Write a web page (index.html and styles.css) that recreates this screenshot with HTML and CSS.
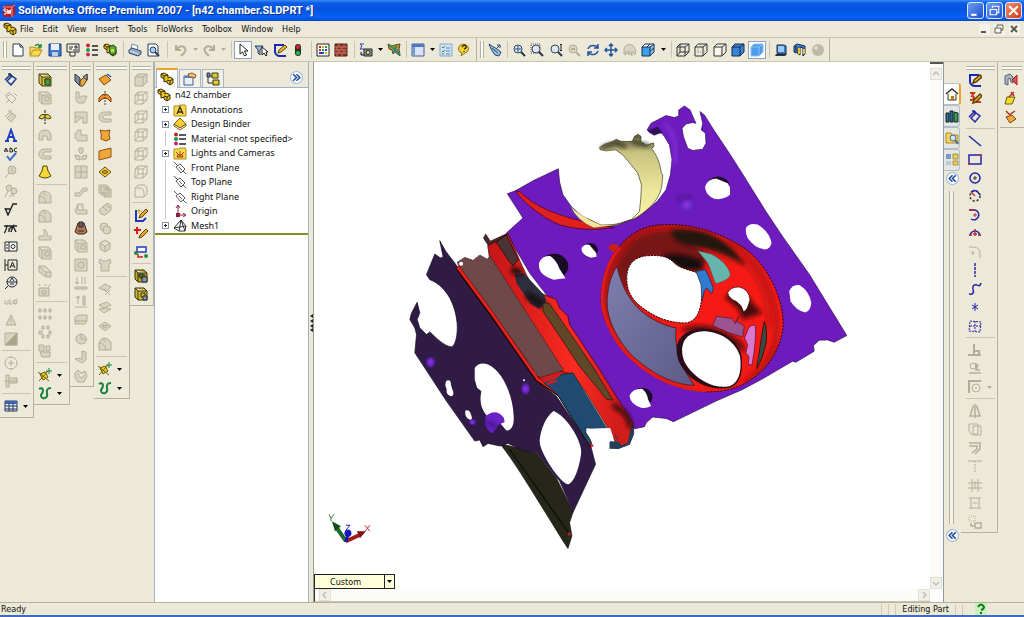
FILE: index.html
```html
<!DOCTYPE html>
<html lang="en">
<head>
<meta charset="utf-8">
<title>SolidWorks Office Premium 2007 - [n42 chamber.SLDPRT *]</title>
<link rel="stylesheet" href="styles.css">
</head>
<body>
<svg class="sprite" aria-hidden="true">
  <symbol id="cube" viewBox="0 0 14 14"><path d="M1 4h8v9H1zM4 1h9v8h-9zM1 4l3-3M9 4l4-3M9 13l4-4M1 13l3-4"/></symbol>
  <symbol id="block" viewBox="0 0 14 14"><path d="M1 4l3-3h9v8l-4 4H1zM1 4h8v9M9 4l4-3"/></symbol>
  <symbol id="frame" viewBox="0 0 14 14"><path d="M1 1h9l3 3v9H4l-3-3zM1 1l3 3h9M4 4v9M7 6h4v4H7z"/></symbol>
  <symbol id="u" viewBox="0 0 14 14"><path d="M13 2H6a5 5 0 0 0 0 10h7V9H7a2 2 0 0 1 0-4h6z"/></symbol>
  <symbol id="dome" viewBox="0 0 14 14"><path d="M1 13V6q1-4 5-5 6 1 7 5v7zM1 6q6 0 7 7M6 1q-1 3 2 4"/></symbol>
  <symbol id="part" viewBox="0 0 14 14"><path d="M1 2l3-1 4 2v3l2-1 3 2v4l-3 2-3-2v-2L4 10V7L1 5z" fill="#e8c820" stroke="#3a2c00"/><path d="M1 2l3 2 4-1M4 4v3M7 8l3 1 3-2M10 9v4" stroke="#3a2c00" fill="none"/></symbol>
  <symbol id="smart" viewBox="0 0 14 14"><path d="M3 8l5-5 4 3-5 6zM1 7l6-6M7 1H4M7 1v3"/></symbol>
  <symbol id="sketch" viewBox="0 0 14 14"><path d="M11 2H2v7q1 4 5 4h6" fill="none" stroke="#1b2ab0" stroke-width="2"/><path d="M5 10l1-3 6-5 2 2-6 5z" fill="#f0b828" stroke="#60400a"/></symbol>
  <symbol id="spline" viewBox="0 0 14 14"><path d="M1 3q3-2 4 1 0 3-2 5 0 4 4 3 3-1 2-5-1-5 4-5" fill="none" stroke="#15803a" stroke-width="2"/></symbol>
  <symbol id="refgeo" viewBox="0 0 14 14"><path d="M2 6l5-2 3 5-5 3zM0 4l11 9M10 3l-9 10" fill="#ecd42c" stroke="#6a5800"/><path d="M11 0v6M8 3h6" stroke="#16803a"/></symbol>
  <symbol id="lens" viewBox="0 0 14 14"><circle cx="6" cy="6" r="4" fill="#dce9f4" stroke="#394656"/><path d="M9 9l4 4" stroke="#26364e" stroke-width="2"/></symbol>
  <symbol id="plane" viewBox="0 0 14 14"><path d="M3 6l4-3 5 5-4 4zM1 1l4 4M10 10l3 3M6 6l3 3" fill="none" stroke="#55585c"/></symbol>
  <symbol id="caret" viewBox="0 0 5 3"><path d="M0 0h5L2.500 3z"/></symbol>
  <symbol id="left2" viewBox="0 0 12 12"><circle cx="6" cy="6" r="5.500" fill="#fff" stroke="#9db6d8"/><path d="M6 3L3 6l3 3M9 3L6 6l3 3" fill="none" stroke="#1a48a0" stroke-width="1.400"/></symbol>
</svg>

<header class="titlebar">
  <svg class="logo" viewBox="0 0 14 14"><path d="M1 3l3-2h9v10l-3 2H1z" fill="#b31c20"/><path d="M1 3h9v10M10 3l3-2" fill="none" stroke="#ef9a92"/><path d="M4 5H2v2h2v3H2M5 5l1 5 1-4 1 4 1-5" fill="none" stroke="#fff"/></svg>
  <h1>SolidWorks Office Premium 2007 - [n42 chamber.SLDPRT *]</h1>
  <div class="winbtns">
    <button aria-label="Minimize"><svg viewBox="0 0 14 14"><path d="M3 11h5" stroke-width="2"/></svg></button>
    <button aria-label="Restore"><svg viewBox="0 0 14 14"><path d="M5 5V3h6v6H9M3 6h6v5H3z"/></svg></button>
    <button class="close" aria-label="Close"><svg viewBox="0 0 14 14"><path d="M3 3l8 8M11 3l-8 8" stroke-width="2"/></svg></button>
  </div>
</header>

<nav class="menubar">
  <svg class="ico" viewBox="0 0 14 14"><use href="#part"/></svg>
  <button>File</button><button>Edit</button><button>View</button><button>Insert</button><button>Tools</button><button>FloWorks</button><button>Toolbox</button><button>Window</button><button>Help</button>
  <div class="docbtns">
    <button aria-label="Minimize document"><svg viewBox="0 0 10 10"><path d="M2 8h5" stroke-width="2"/></svg></button>
    <button aria-label="Restore document"><svg viewBox="0 0 10 10"><path d="M3 3V1h6v5H7M1 4h6v5H1z"/></svg></button>
    <button aria-label="Close document"><svg viewBox="0 0 10 10"><path d="M2 2l6 6M8 2L2 8" stroke-width="2"/></svg></button>
  </div>
</nav>

<div class="toolbars">
  <div class="hbar">
    <i class="grip"></i>
    <div class="set">
      <button class="tool" aria-label="New"><svg viewBox="0 0 14 14"><path d="M2 1h7l3 3v9H2zM9 1v3h3" fill="#fff" stroke="#2a3c58"/></svg></button>
      <button class="tool" aria-label="Open"><svg viewBox="0 0 14 14"><path d="M1 12V4h4l1 1h5v2" fill="#f6dc70" stroke="#b68a18"/><path d="M1 13l3-6h9l-3 6z" fill="#fbd94a" stroke="#b68a18"/><path d="M6 3q3-3 5 0M9 4h3V1" fill="none" stroke="#1e8a2c" stroke-width="1.500"/></svg></button>
      <button class="tool" aria-label="Save"><svg viewBox="0 0 14 14"><path d="M1 1h12v12H1z" fill="#3f78cc" stroke="#1d3f85"/><path d="M3 1h8v6H3z" fill="#e8f0fa"/><path d="M4 9h6v4H4z" fill="#b9cdea"/></svg></button>
      <button class="tool" aria-label="Make drawing"><svg viewBox="0 0 14 14"><path d="M1 1h12v8H1zM3 4h4M3 6h3M9 3h2v2H9zM7 7h5M4 9v4h5V9" fill="#f4f2e8" stroke="#2d2d2d"/></svg></button>
      <button class="tool" aria-label="Edit material"><svg viewBox="0 0 14 14"><circle cx="3" cy="2.500" r="2" fill="#d02030"/><circle cx="3" cy="7" r="2" fill="#20a040"/><circle cx="3" cy="11.500" r="2" fill="#d02060"/><path d="M7 3h6M7 7h6M7 12h6" stroke="#222" stroke-width="1.500"/></svg></button>
      <button class="tool" aria-label="Make assembly"><svg viewBox="0 0 14 14"><use href="#part"/><path d="M6 4l4-2 3 2v6l-3 2-3-1z" fill="#58a838" stroke="#1e4a10"/><path d="M8 6h3v3H8z" fill="#b9df50"/></svg></button>
    </div><i class="sep"></i>
    <div class="set">
      <button class="tool" aria-label="Print"><svg viewBox="0 0 14 14"><path d="M3 6l1-5 6 2-1 4" fill="#fff" stroke="#6b87ab"/><path d="M1 7l3-2 9 3v3l-3 2-9-3z" fill="#90a9c6" stroke="#354a66"/><path d="M2 8l8 3" stroke="#e7eef7"/></svg></button>
      <button class="tool" aria-label="Print preview"><svg viewBox="0 0 14 14"><path d="M2 1h8l2 2v10H2z" fill="#fff" stroke="#2a3c58"/><circle cx="7" cy="7" r="3" fill="#a9cdf0" stroke="#2a3c58"/><path d="M9 9l4 4" stroke="#2a3c58" stroke-width="2"/></svg></button>
    </div><i class="sep wide"></i>
    <div class="set dim">
      <button class="tool" aria-label="Undo"><svg viewBox="0 0 14 14"><path d="M2 2v5h5M3 6q3-4 7-2 3 3 0 6l-3 3" fill="none" stroke-width="2"/></svg></button><button class="drop" aria-label="Undo list"><svg viewBox="0 0 5 3"><use href="#caret"/></svg></button>
      <button class="tool" aria-label="Redo"><svg viewBox="0 0 14 14"><path d="M12 2v5H7M11 6Q8 2 4 4q-3 3 0 6l3 3" fill="none" stroke-width="2"/></svg></button><button class="drop" aria-label="Redo list"><svg viewBox="0 0 5 3"><use href="#caret"/></svg></button>
    </div><i class="sep"></i>
    <div class="set">
      <button class="tool on" aria-label="Select"><svg viewBox="0 0 14 14"><path d="M4 1v10l2.500-2 2 4 2-1-2-4H12z" fill="#fff" stroke="#222"/></svg></button>
      <button class="tool" aria-label="Selection filter"><svg viewBox="0 0 14 14"><path d="M1 3h8L6 7v5L4 10V7z" fill="#9fb9d8" stroke="#2a3c58"/><path d="M8 4v8l2-2 2 3 1-1-1-3h2z" fill="#fff" stroke="#222"/></svg></button>
      <button class="tool" aria-label="Sketch"><svg viewBox="0 0 14 14"><use href="#sketch"/></svg></button>
      <button class="tool" aria-label="Rebuild"><svg viewBox="0 0 14 14"><rect x="4" y="1" width="6" height="12" rx="3" fill="#263226"/><circle cx="7" cy="4" r="2" fill="#e0202a"/><circle cx="7" cy="10" r="2" fill="#28c040"/></svg></button>
    </div><i class="sep"></i>
    <div class="set">
      <button class="tool" aria-label="Edit color"><svg viewBox="0 0 14 14"><path d="M1 1h12v12H1z" fill="#fff" stroke="#222"/><path d="M3 4h2M3 7h2" stroke="#e02020" stroke-width="2"/><path d="M6 4h2M9 10h2" stroke="#e0b020" stroke-width="2"/><path d="M9 4h2M6 7h2" stroke="#20a040" stroke-width="2"/><path d="M9 7h2M3 10h5" stroke="#3040c0" stroke-width="2"/></svg></button>
      <button class="tool" aria-label="Edit texture"><svg viewBox="0 0 14 14"><path d="M1 1h12v12H1z" fill="#8e2f24" stroke="#5a1a12"/><path d="M1 4h12M1 7h12M1 10h12M5 1v3M10 1v3M3 4v3M8 4v3M5 7v3M10 7v3M3 10v3M8 10v3" stroke="#c07c68"/></svg></button>
    </div><i class="sep"></i>
    <div class="set">
      <button class="tool" aria-label="Measure"><svg viewBox="0 0 14 14"><path d="M5 1H1l2 2-2 3h4" fill="none" stroke="#2a3cb0"/><path d="M2 9v3h3M5 6h8v7H5z" fill="#8898a8" stroke="#222"/><circle cx="9" cy="9.500" r="2" fill="#e8e080" stroke="#222"/></svg></button><button class="drop" aria-label="Measure list"><svg viewBox="0 0 5 3"><use href="#caret"/></svg></button>
      <button class="tool" aria-label="Flow simulation"><svg viewBox="0 0 14 14"><path d="M1 1l4 2 3-1 5-1-1 5 1 7-5-4-2 2-1-4-3-1z" fill="#e08828" stroke="#5a4a20"/><path d="M2 2l5 4 3-3" stroke="#2c9a48" stroke-width="2" fill="none"/><path d="M7 10l1-4 5 5" stroke="#188a90" stroke-width="2" fill="none"/></svg></button>
    </div><i class="sep"></i>
    <div class="set">
      <button class="tool" aria-label="Viewports"><svg viewBox="0 0 14 14"><path d="M1 1h12v12H1z" fill="#d8e4f6" stroke="#46608e"/><path d="M1 1h12v3H1z" fill="#4e78c0"/><path d="M1 4h3v9H1z" fill="#7898d0"/></svg></button><button class="drop" aria-label="Viewport list"><svg viewBox="0 0 5 3"><use href="#caret"/></svg></button>
      <button class="tool" aria-label="Options"><svg viewBox="0 0 14 14"><path d="M1 1h12v12H1z" fill="#cfe2f6" stroke="#86a6cc"/><path d="M3 4l1 1 2-2M3 8l1 1 2-2M3 11h2" fill="none" stroke="#28903c"/><path d="M7 5h4M7 8h4M7 11h4" stroke="#6280a4"/></svg></button>
      <button class="tool" aria-label="Help"><svg viewBox="0 0 14 14"><path d="M4 13l1-3a5 4.500 0 1 1 3 0z" fill="#f5d233" stroke="#92701a"/><path d="M5 4q2-3 4-1 1 2-2 3M7 8v1" fill="none" stroke="#4a3408" stroke-width="1.500"/></svg></button>
    </div>
  </div>
  <div class="hbar">
    <i class="grip"></i>
    <div class="set">
      <button class="tool" aria-label="View orientation"><svg viewBox="0 0 14 14"><path d="M1 1l2 5 4 6 4 1 2-4-4-3-5-3z" fill="#9fc0e0" stroke="#22446e"/><path d="M4 5l6 5M8 6l4-4M9 2h3v3" fill="none" stroke="#22446e"/></svg></button>
    </div><i class="sep"></i>
    <div class="set">
      <button class="tool" aria-label="Zoom to fit"><svg viewBox="0 0 14 14"><use href="#lens"/><path d="M3 6h6M6 3v6" stroke="#2a4a90"/></svg></button>
      <button class="tool" aria-label="Zoom to area"><svg viewBox="0 0 14 14"><path d="M1 1h9v9H1z" fill="none" stroke="#555" stroke-dasharray="1 1"/><use href="#lens"/></svg></button>
      <button class="tool" aria-label="Zoom in or out"><svg viewBox="0 0 14 14"><use href="#lens"/><path d="M12 1v7M11 2l1-1 1 1M11 7l1 1 1-1" fill="none" stroke="#222"/></svg></button>
      <button class="tool" aria-label="Zoom to selection"><svg class="dim" viewBox="0 0 14 14"><circle cx="6" cy="6" r="4"/><path d="M4 6h4M9 9l4 4" stroke-width="2"/></svg></button>
      <button class="tool" aria-label="Rotate view"><svg viewBox="0 0 14 14"><path d="M2 6q2-5 8-3l2 2M12 1v4H8M12 8q-2 5-8 3L2 9M2 13V9h4" fill="none" stroke="#20549a" stroke-width="1.500"/></svg></button>
      <button class="tool" aria-label="Pan"><svg viewBox="0 0 14 14"><path d="M7 1v12M1 7h12M5 3l2-2 2 2M5 11l2 2 2-2M3 5L1 7l2 2M11 5l2 2-2 2" fill="none" stroke="#20549a" stroke-width="1.500"/></svg></button>
      <button class="tool" aria-label="Roll view"><svg class="dim" viewBox="0 0 14 14"><path d="M1 11V5q3-5 8-3 5 4 3 10L9 8v5L6 8v4L3 8v4z"/></svg></button>
      <button class="tool" aria-label="Standard views"><svg viewBox="0 0 14 14"><path d="M1 4h8v9H1z" fill="#38a0e8"/><path d="M1 4l3-3h9l-4 3z" fill="#fff"/><path d="M9 4l4-3v8l-4 4z" fill="#7cc4f4"/><path d="M1 4l3-3h9v8l-4 4H1zM1 4h8v9M9 4l4-3M6 4l3-3M13 5l-4 3" fill="none" stroke="#1d2f52"/></svg></button><button class="drop" aria-label="Standard view list"><svg viewBox="0 0 5 3"><use href="#caret"/></svg></button>
    </div><i class="sep"></i>
    <div class="set">
      <button class="tool" aria-label="Wireframe"><svg viewBox="0 0 14 14" fill="none" stroke="#333"><use href="#cube"/></svg></button>
      <button class="tool" aria-label="Hidden lines visible"><svg viewBox="0 0 14 14" fill="none" stroke="#333"><use href="#block"/><path d="M4 1v8H1M4 9h9" stroke="#999" stroke-dasharray="1 1"/></svg></button>
      <button class="tool" aria-label="Hidden lines removed"><svg viewBox="0 0 14 14" fill="#f7f5ec" stroke="#333"><use href="#block"/></svg></button>
      <button class="tool" aria-label="Shaded with edges"><svg viewBox="0 0 14 14" fill="#3b86d4" stroke="#14294c"><use href="#block"/></svg></button>
      <button class="tool on" aria-label="Shaded"><svg viewBox="0 0 14 14" fill="#4e9bea" stroke="#86c0f6"><use href="#block"/></svg></button>
    </div><i class="sep"></i>
    <div class="set">
      <button class="tool" aria-label="Shadows"><svg viewBox="0 0 14 14"><path d="M2 11h11l-2 2H1z" fill="#333"/><path d="M3 2h7l2 1v8H4l-1-1z" fill="#3f7fca" stroke="#14294c"/><path d="M4 3h6v6H4z" fill="#9ccaf4"/></svg></button>
      <button class="tool" aria-label="Section view"><svg viewBox="0 0 14 14"><path d="M2 3l3-2 8 2v8l-2 2V5L8 4v8l-3-2V4L4 3v7l-2-1z" fill="#3f7fca" stroke="#14294c"/><path d="M6 5h2v6H6zM11 6h2v5h-2z" fill="#e8c030"/></svg></button>
      <button class="tool" aria-label="RealView"><svg viewBox="0 0 14 14"><circle cx="7" cy="7" r="6" fill="#bdb9a6"/><circle cx="5" cy="5" r="2" fill="#dedbca"/></svg></button>
    </div>
  </div>
</div>

<main class="work">
  <div class="vbar w34">
    <i class="hgrip"></i>
    <div class="col">
      <button class="tool" aria-label="Smart dimension"><svg viewBox="0 0 14 14" fill="#dfe8f8" stroke="#1c3478" stroke-width="1.500"><use href="#smart"/></svg></button>
      <button class="tool" aria-label="Auto dimension"><svg class="dim" viewBox="0 0 14 14"><path d="M2 6l5-3 5 5-4 4zM1 5l5-4M10 2l3 3M2 12l3-3" fill="none"/></svg></button>
      <button class="tool" aria-label="Model items"><svg class="dim" viewBox="0 0 14 14"><use href="#smart"/></svg></button>
      <button class="tool" aria-label="Note"><svg viewBox="0 0 14 14"><path d="M1 13h4M9 13h4M3 13L7 2l4 11M5 9h4" fill="none" stroke="#1e3cc0" stroke-width="2"/></svg></button>
      <button class="tool" aria-label="Spell checker"><svg viewBox="0 0 14 14"><path d="M0 5l2-4 2 4M1 4h2M6 1v4h2q2-1 0-2 1-2-2-2M13 1q-3 0-3 2t3 2" fill="none" stroke="#222"/><path d="M3 9l3 4 6-7" fill="none" stroke="#3b70c8" stroke-width="2"/></svg></button>
      <button class="tool" aria-label="Balloon"><svg class="dim" viewBox="0 0 14 14"><circle cx="8" cy="5" r="4"/><path d="M5 8l-4 5M8 3v4"/></svg></button>
      <button class="tool" aria-label="Auto balloon"><svg class="dim" viewBox="0 0 14 14"><circle cx="5" cy="4" r="3"/><circle cx="10" cy="7" r="3"/><path d="M4 7l-3 6M9 10l-4 3M8 9l2 4"/></svg></button>
      <button class="tool" aria-label="Surface finish"><svg viewBox="0 0 14 14"><path d="M1 6l3 7 5-11h4M2 7h5" fill="none" stroke="#222" stroke-width="1.400"/></svg></button>
      <button class="tool" aria-label="Weld symbol"><svg viewBox="0 0 14 14"><path d="M0 12q2-1 3-8M0 5h13M5 11V8l4-3-2 6M9 5l3 6" fill="none" stroke="#222" stroke-width="1.400"/></svg></button>
      <button class="tool" aria-label="Geometric tolerance"><svg viewBox="0 0 14 14"><path d="M1 3h12v9H1zM5 3v9M2 6h2M2 9h2" fill="#fff" stroke="#222"/><circle cx="9" cy="7.500" r="2" fill="none" stroke="#222"/></svg></button>
      <button class="tool" aria-label="Datum feature"><svg viewBox="0 0 14 14"><path d="M1 1v12M1 7h3M4 2h9v10H4zM6 10l2.500-6L11 10M7 8h3" fill="none" stroke="#222"/></svg></button>
      <button class="tool" aria-label="Datum target"><svg viewBox="0 0 14 14"><circle cx="8" cy="6" r="5" fill="#e8edf4" stroke="#222"/><path d="M3 6h10M4 10l-3 3M6 5l2-3 2 3M6 8h4" fill="none" stroke="#222"/></svg></button>
      <button class="tool" aria-label="Hole callout"><svg class="dim" viewBox="0 0 14 14"><path d="M1 5v4h3V5M6 4v5M5 9h3M9 9l4-5" fill="none"/><circle cx="11" cy="7" r="2"/></svg></button>
      <button class="tool" aria-label="Revision symbol"><svg class="dim" viewBox="0 0 14 14"><path d="M7 2l5 10H2zM7 6v3"/></svg></button>
      <button class="tool" aria-label="Area hatch"><svg class="dim" viewBox="0 0 14 14"><path d="M1 1h12v12H1z"/><path d="M13 1v12H1z" fill="#aaa58b"/></svg></button>
      <i class="rule"></i>
      <button class="tool" aria-label="Center mark"><svg class="dim" viewBox="0 0 14 14"><circle cx="7" cy="7" r="6" fill="none"/><path d="M7 4v6M4 7h6M7 0v2M7 12v2"/></svg></button>
      <button class="tool" aria-label="Centerline"><svg class="dim" viewBox="0 0 14 14"><path d="M2 1h3v12H2zM5 4h8v5H5M0 7h14"/></svg></button>
      <i class="rule"></i>
      <div class="split"><button class="tool" aria-label="Tables"><svg viewBox="0 0 14 14"><path d="M1 2h12v10H1z" fill="#e6eefa" stroke="#26375c"/><path d="M1 2h12v3H1z" fill="#3c62b4"/><path d="M1 7h12M1 10h12M5 4v8M9 4v8" stroke="#26375c"/></svg></button><button class="drop" aria-label="Table list"><svg viewBox="0 0 5 3"><use href="#caret"/></svg></button></div>
    </div>
  </div>

  <div class="vbar w35">
    <i class="hgrip"></i>
    <div class="col">
      <button class="tool" aria-label="Extruded boss"><svg viewBox="0 0 14 14" fill="#e2c044" stroke="#3c3c10"><use href="#frame"/><path d="M7 6h5v6H7z" fill="#38a040"/></svg></button>
      <button class="tool" aria-label="Extruded cut"><svg class="dim" viewBox="0 0 14 14"><use href="#frame"/></svg></button>
      <button class="tool" aria-label="Revolved boss"><svg viewBox="0 0 14 14"><path d="M1 8q2-5 6-3 4-2 6 3l-3 1-3-2-3 2z" fill="#ecd23a" stroke="#4a3c08"/><path d="M7 0v14" stroke="#222" stroke-dasharray="3 1"/></svg></button>
      <button class="tool" aria-label="Revolved cut"><svg class="dim" viewBox="0 0 14 14"><path d="M1 12V7q1-5 6-5t6 5v5H9V8H5v4z"/></svg></button>
      <button class="tool" aria-label="Swept boss"><svg class="dim" viewBox="0 0 14 14"><use href="#u"/></svg></button>
      <button class="tool" aria-label="Lofted boss"><svg viewBox="0 0 14 14"><path d="M5 1h4l1 5 3 5q-6 4-12 0l3-5z" fill="#f3d836" stroke="#5a4808"/></svg></button>
      <i class="rule"></i>
      <button class="tool" aria-label="Fillet"><svg class="dim" viewBox="0 0 14 14"><use href="#dome"/></svg></button>
      <button class="tool" aria-label="Chamfer"><svg class="dim" viewBox="0 0 14 14"><use href="#dome"/></svg></button>
      <button class="tool" aria-label="Rib"><svg class="dim" viewBox="0 0 14 14"><path d="M1 9h5V2l3 3v4h4v4H1z"/></svg></button>
      <button class="tool" aria-label="Shell"><svg class="dim" viewBox="0 0 14 14"><use href="#frame"/></svg></button>
      <button class="tool" aria-label="Draft"><svg class="dim" viewBox="0 0 14 14"><path d="M1 2h6l6 6v5H8L1 8zM1 2l7 6h5M8 8v5"/></svg></button>
      <button class="tool" aria-label="Hole wizard"><svg class="dim" viewBox="0 0 14 14"><path d="M1 5h10v8H1zM4 8h4v3H4zM10 4l3-3M7 3l1-2M2 3L1 1"/></svg></button>
      <i class="rule"></i>
      <button class="tool" aria-label="Linear pattern"><svg class="dim" viewBox="0 0 14 14"><path d="M1 2h2v3H1zM6 2h2v3H6zM11 2h2v3h-2zM1 9h2v3H1zM6 9h2v3H6zM11 9h2v3h-2z"/></svg></button>
      <button class="tool" aria-label="Circular pattern"><svg class="dim" viewBox="0 0 14 14"><path d="M4 1h2v3H4zM9 1h2v3H9zM1 6h3v3H1zM11 6h2v3h-2zM4 10h2v3H4zM9 10h2v3H9z"/></svg></button>
      <button class="tool" aria-label="Mirror"><svg class="dim" viewBox="0 0 14 14"><path d="M1 1h5v6H1zM8 2h4v5H8zM2 8h10v5H4z"/></svg></button>
      <i class="rule"></i>
      <div class="split"><button class="tool" aria-label="Reference geometry"><svg viewBox="0 0 14 14"><use href="#refgeo"/></svg></button><button class="drop" aria-label="Reference geometry list"><svg viewBox="0 0 5 3"><use href="#caret"/></svg></button></div>
      <div class="split"><button class="tool" aria-label="Curves"><svg viewBox="0 0 14 14"><use href="#spline"/></svg></button><button class="drop" aria-label="Curve list"><svg viewBox="0 0 5 3"><use href="#caret"/></svg></button></div>
    </div>
  </div>

  <div class="vbar w24">
    <i class="hgrip"></i>
    <div class="col">
      <button class="tool" aria-label="Base flange"><svg viewBox="0 0 14 14"><path d="M1 1l5 4v8L1 8z" fill="#7a89a8" stroke="#333"/><path d="M6 13V8l3-3 4-4v6l-4 6z" fill="#e8a838" stroke="#4a3a20"/><path d="M9 4l4-3v6z" fill="#8ea0c4" stroke="#333"/></svg></button>
      <button class="tool" aria-label="Convert to sheet metal"><svg class="dim" viewBox="0 0 14 14"><path d="M2 1h3v6l3-2h5l-3 7H4L2 9z"/></svg></button>
      <button class="tool" aria-label="Lofted bend"><svg class="dim" viewBox="0 0 14 14"><path d="M1 2h12v11H9V7L1 13zM1 7h6"/></svg></button>
      <button class="tool" aria-label="Edge flange"><svg class="dim" viewBox="0 0 14 14"><path d="M13 7H7V2H4L1 6v4l3 3h9z"/></svg></button>
      <button class="tool" aria-label="Miter flange"><svg class="dim" viewBox="0 0 14 14"><path d="M5 1h4v4L7 7 5 5zM1 8l5 1v4L2 12zM13 8l-5 1v4l4-1z"/></svg></button>
      <button class="tool" aria-label="Hem"><svg class="dim" viewBox="0 0 14 14"><path d="M1 1h12v12H1zM1 7h12M7 1v12"/></svg></button>
      <button class="tool" aria-label="Jog"><svg class="dim" viewBox="0 0 14 14"><path d="M1 12V9h4l4-5h4v3h-3l-4 5z"/></svg></button>
      <button class="tool" aria-label="Sketched bend"><svg class="dim" viewBox="0 0 14 14"><path d="M4 2h5v6h4v4H3L1 9zM4 2v6h5"/></svg></button>
      <button class="tool" aria-label="Forming tool"><svg viewBox="0 0 14 14"><path d="M4 2h6l3 9-3 2H4l-3-2z" fill="#b07a58" stroke="#3a2820"/><path d="M5 1h4v5H5zM4 10h6" fill="#6a5a70" stroke="#3a2820"/></svg></button>
      <button class="tool" aria-label="Closed corner"><svg class="dim" viewBox="0 0 14 14"><use href="#frame"/></svg></button>
      <button class="tool" aria-label="Simple hole"><svg class="dim" viewBox="0 0 14 14"><path d="M1 1h12v12H1z"/><circle cx="7" cy="7" r="3"/></svg></button>
      <button class="tool" aria-label="Vent"><svg class="dim" viewBox="0 0 14 14"><path d="M3 1v7M1 6l2 2 2-2M8 1v7M11 1v7M1 11h12v2H1z"/></svg></button>
      <button class="tool" aria-label="Unfold"><svg class="dim" viewBox="0 0 14 14"><path d="M4 9V1M2 3l2-2 2 2M9 1h2v9H9zM1 12h12"/></svg></button>
      <button class="tool" aria-label="Fold"><svg class="dim" viewBox="0 0 14 14"><path d="M1 4l3-2h9v6l-2 3H1zM1 8h12"/></svg></button>
      <button class="tool" aria-label="Flatten"><svg class="dim" viewBox="0 0 14 14"><circle cx="7" cy="7" r="5"/><path d="M7 2v5h6l-3 5"/></svg></button>
      <button class="tool" aria-label="No bends"><svg class="dim" viewBox="0 0 14 14"><path d="M8 1l4 1v8l-4 3-7-4 5-1 2 2z"/></svg></button>
      <button class="tool" aria-label="Insert bends"><svg class="dim" viewBox="0 0 14 14"><path d="M1 4l3-3 3 3 4-2 2 5-3 6H4L1 9zM4 5l3 4 4-3"/></svg></button>
    </div>
  </div>

  <div class="vbar w36">
    <i class="hgrip"></i>
    <div class="col">
      <button class="tool" aria-label="Extruded surface"><svg viewBox="0 0 14 14"><path d="M1 6l7-4 5 5-7 5z" fill="#f0a02c" stroke="#7c4a0c"/><path d="M9 1l4 3" stroke="#2a4ac0" stroke-width="1.500"/></svg></button>
      <button class="tool" aria-label="Revolved surface"><svg viewBox="0 0 14 14"><path d="M1 11V7q6-8 12 0v4q-3-4-6-4t-6 4z" fill="#f0902c" stroke="#7c3a0c"/><path d="M7 0v14" stroke="#444" stroke-dasharray="2 1"/></svg></button>
      <button class="tool" aria-label="Swept surface"><svg class="dim" viewBox="0 0 14 14"><use href="#u"/></svg></button>
      <button class="tool" aria-label="Lofted surface"><svg viewBox="0 0 14 14"><path d="M2 2q5 2 10 0-2 4 0 9l-4 2-5-2q1-5-1-9z" fill="#f2a63a" stroke="#8a5410"/></svg></button>
      <button class="tool" aria-label="Planar surface"><svg viewBox="0 0 14 14"><path d="M1 4l12-3v9L1 13z" fill="#f2a63a" stroke="#8a5410"/></svg></button>
      <button class="tool" aria-label="Offset surface"><svg viewBox="0 0 14 14"><path d="M1 7l6-5 6 5-6 5z" fill="#f0d83a" stroke="#6a4a10"/><path d="M4 7l3-2 3 2-3 2z" fill="#e89028" stroke="#6a4a10"/></svg></button>
      <button class="tool" aria-label="Radiate surface"><svg class="dim" viewBox="0 0 14 14"><path d="M1 1h8v8H1zM3 3h8v8H3zM6 5h7v8H6z"/></svg></button>
      <button class="tool" aria-label="Knit surface"><svg class="dim" viewBox="0 0 14 14"><path d="M1 8l8-7 4 2v5l-6 5-4-1zM5 5l4 4M8 3l4 3"/></svg></button>
      <button class="tool" aria-label="Trim surface"><svg class="dim" viewBox="0 0 14 14"><circle cx="6" cy="6" r="4"/><circle cx="9" cy="9" r="4"/></svg></button>
      <button class="tool" aria-label="Move face"><svg class="dim" viewBox="0 0 14 14"><path d="M2 4l5-3 5 3v6l-5 3-5-3zM2 4l5 3 5-3M7 7v6"/></svg></button>
      <button class="tool" aria-label="Thicken"><svg class="dim" viewBox="0 0 14 14"><path d="M2 1l3 2h4l3-2 1 4-2 1v7H3V6L1 5z"/></svg></button>
      <i class="rule"></i>
      <button class="tool" aria-label="Delete face"><svg class="dim" viewBox="0 0 14 14"><path d="M1 6l6-4 6 3-5 4zM6 7l6 6M12 8l-5 5"/></svg></button>
      <button class="tool" aria-label="Replace face"><svg class="dim" viewBox="0 0 14 14"><path d="M1 5l8-3 4 3-7 3zM1 9l7-1 5 1-7 4z"/></svg></button>
      <button class="tool" aria-label="Untrim surface"><svg class="dim" viewBox="0 0 14 14"><path d="M1 7l6-4 6 4-6 5zM4 7l3-1 3 1-3 2z"/></svg></button>
      <button class="tool" aria-label="Surface fillet"><svg class="dim" viewBox="0 0 14 14"><use href="#dome"/></svg></button>
      <i class="rule"></i>
      <div class="split"><button class="tool" aria-label="Surface reference geometry"><svg viewBox="0 0 14 14"><use href="#refgeo"/></svg></button><button class="drop" aria-label="Surface reference list"><svg viewBox="0 0 5 3"><use href="#caret"/></svg></button></div>
      <div class="split"><button class="tool" aria-label="Surface curves"><svg viewBox="0 0 14 14"><use href="#spline"/></svg></button><button class="drop" aria-label="Surface curve list"><svg viewBox="0 0 5 3"><use href="#caret"/></svg></button></div>
    </div>
  </div>

  <div class="vbar w24">
    <i class="hgrip"></i>
    <div class="col">
      <button class="tool" aria-label="Front view"><svg class="dim" viewBox="0 0 14 14"><use href="#block"/></svg></button>
      <button class="tool" aria-label="Back view"><svg class="dim line" viewBox="0 0 14 14"><use href="#cube"/></svg></button>
      <button class="tool" aria-label="Left view"><svg class="dim line" viewBox="0 0 14 14"><use href="#cube"/></svg></button>
      <button class="tool" aria-label="Right view"><svg class="dim line" viewBox="0 0 14 14"><use href="#cube"/></svg></button>
      <button class="tool" aria-label="Top view"><svg class="dim line" viewBox="0 0 14 14"><use href="#cube"/></svg></button>
      <button class="tool" aria-label="Bottom view"><svg class="dim line" viewBox="0 0 14 14"><use href="#cube"/></svg></button>
      <button class="tool" aria-label="Isometric view"><svg class="dim line" viewBox="0 0 14 14"><path d="M1 4l3-3h6q3 1 3 4v5l-3 3H1zM1 4h6q3 1 3 4v5"/></svg></button>
      <i class="rule"></i>
      <button class="tool" aria-label="3D sketch"><svg viewBox="0 0 14 14"><path d="M2 2v11h7l3-3" fill="none" stroke="#2437c0" stroke-width="2"/><path d="M5 10l1-3 6-6 2 2-6 6z" fill="#e8a828" stroke="#60400a"/><path d="M5 1v5M3 3h5" stroke="#c8a020"/></svg></button>
      <button class="tool" aria-label="Add sketch"><svg viewBox="0 0 14 14"><path d="M3 1v7M0 4h7" stroke="#d81c24" stroke-width="2"/><path d="M5 12l1-3 6-6 2 2-6 6z" fill="#e8a828" stroke="#60400a"/></svg></button>
      <button class="tool" aria-label="Replace sketch"><svg viewBox="0 0 14 14"><path d="M3 2h9v5H3z" fill="#fff" stroke="#2437c0" stroke-width="1.500"/><circle cx="2" cy="8" r="2" fill="#189040"/><circle cx="12" cy="11" r="2" fill="#189040"/><path d="M4 9v3h5" fill="none" stroke="#d02020" stroke-width="1.500"/></svg></button>
      <i class="rule"></i>
      <button class="tool" aria-label="Mold core"><svg viewBox="0 0 14 14" fill="#c0a428" stroke="#33300c"><use href="#frame"/><path d="M8 8h5v5H8z" fill="#8090d0"/><path d="M5 5h4v3H5z" fill="#308040"/></svg></button>
      <button class="tool" aria-label="Mold cavity"><svg viewBox="0 0 14 14" fill="#d0b838" stroke="#33300c"><use href="#frame"/><path d="M9 9h4v4H9z" fill="#8090d0"/></svg></button>
    </div>
  </div>

  <aside class="tree">
    <div class="tabs">
      <button class="tab active" aria-label="FeatureManager"><svg class="ico" viewBox="0 0 14 14"><use href="#part"/></svg></button>
      <button class="tab" aria-label="PropertyManager"><svg class="ico" viewBox="0 0 14 14"><path d="M1 4h9v9H1z" fill="#e8f0fb" stroke="#3e5e94"/><path d="M1 4h9v2H1z" fill="#5a82c8"/><path d="M5 2l4-1 4 2-1 3-3-1H6z" fill="#f2be84" stroke="#8a5620"/></svg></button>
      <button class="tab" aria-label="ConfigurationManager"><svg class="ico" viewBox="0 0 14 14"><path d="M2 1v10h5M2 4h5" fill="none" stroke="#333"/><path d="M6 1h6v5H6zM7 8h6v5H7z" fill="#d9c83a" stroke="#3a3a10"/><path d="M1 1h3v4H1z" fill="#668ac0" stroke="#333"/></svg></button>
      <button class="more" aria-label="Show display pane"><svg class="flip" viewBox="0 0 12 12"><use href="#left2"/></svg></button>
    </div>
    <ul class="nodes">
      <li class="root"><svg class="ico" viewBox="0 0 14 14"><use href="#part"/></svg>n42 chamber</li>
      <li><button class="plus" aria-label="Expand Annotations"></button><svg class="ico" viewBox="0 0 14 14"><path d="M1 3h5l1-1h5l1 1v10H1z" fill="#f8d84c" stroke="#b08a14"/><path d="M4 11l3-7 3 7M5 9h4" fill="none" stroke="#3a3208" stroke-width="1.400"/></svg>Annotations</li>
      <li><button class="plus" aria-label="Expand Design Binder"></button><svg class="ico" viewBox="0 0 14 14"><path d="M1 7l6-6 6 6-6 4z" fill="#f6cf34" stroke="#7a5a08"/><path d="M1 7v2l6 4 6-4V7l-6 4z" fill="#fff" stroke="#7a5a08"/></svg>Design Binder</li>
      <li><i class="noplus"></i><svg class="ico" viewBox="0 0 14 14"><circle cx="3" cy="2.500" r="2" fill="#c02030"/><circle cx="3" cy="7" r="2" fill="#209040"/><circle cx="3" cy="11.500" r="2" fill="#c02080"/><path d="M6 3h7M6 7h7M6 12h7" stroke="#222" stroke-width="1.400"/></svg>Material &lt;not specified&gt;</li>
      <li><button class="plus" aria-label="Expand Lights and Cameras"></button><svg class="ico" viewBox="0 0 14 14"><path d="M1 3h5l1-1h5l1 1v10H1z" fill="#f8d84c" stroke="#b08a14"/><path d="M4 11a3 3 0 0 1 6 0zM7 5v2M3 6l2 2M11 6L9 8" fill="#e87820" stroke="#a04810"/></svg>Lights and Cameras</li>
      <li><i class="noplus"></i><svg class="ico" viewBox="0 0 14 14"><use href="#plane"/></svg>Front Plane</li>
      <li><i class="noplus"></i><svg class="ico" viewBox="0 0 14 14"><use href="#plane"/></svg>Top Plane</li>
      <li><i class="noplus"></i><svg class="ico" viewBox="0 0 14 14"><use href="#plane"/></svg>Right Plane</li>
      <li><i class="noplus"></i><svg class="ico" viewBox="0 0 14 14"><path d="M5 2v9h7M3 4l2-3 2 3M10 9l3 2-3 2" fill="none" stroke="#8c1f3c"/><path d="M3 9h4v4H3z" fill="#8c1f3c"/></svg>Origin</li>
      <li><button class="plus" aria-label="Expand Mesh1"></button><svg class="ico" viewBox="0 0 14 14"><path d="M1 9l7-8 5 6-1 5H6zM8 1L6 12M8 1l4 11M1 9l12-2" fill="none" stroke="#333"/></svg>Mesh1</li>
    </ul>
  </aside>
  <div class="splitter"><svg viewBox="0 0 3 18"><path d="M3 0v4L0 2zM3 5v4L0 7zM3 10v4l-3-2zM3 14v4l-3-2z" fill="#222"/></svg></div>

  <section class="view">
    <div class="canvas">
      <svg class="model" viewBox="314 62 617 511" preserveAspectRatio="xMinYMin meet" role="img" aria-label="Mesh model of the chamber">
        <defs>
          <linearGradient id="band" x1="0" y1="0" x2="1" y2="0"><stop offset="0" stop-color="#c41518"/><stop offset=".6" stop-color="#fa2a20"/><stop offset="1" stop-color="#c0161a"/></linearGradient>
          <linearGradient id="bowl" x1="0" y1="0" x2="1" y2="1"><stop offset="0" stop-color="#8a1216"/><stop offset=".5" stop-color="#f51a16"/><stop offset=".8" stop-color="#f41a14"/><stop offset="1" stop-color="#a01012"/></linearGradient>
          <linearGradient id="moon" x1="0" y1="0" x2="0" y2="1"><stop offset="0" stop-color="#55513a"/><stop offset=".2" stop-color="#c9c381"/><stop offset=".6" stop-color="#ece79a"/><stop offset="1" stop-color="#fbf5a6"/></linearGradient>
          <linearGradient id="slate" x1="0" y1="0" x2="1" y2="1"><stop offset="0" stop-color="#7e7eae"/><stop offset="1" stop-color="#5d5b85"/></linearGradient>
          <radialGradient id="bump"><stop offset="0" stop-color="#8a3ae0"/><stop offset=".6" stop-color="#6420c0"/><stop offset="1" stop-color="#6a1cbe" stop-opacity="0"/></radialGradient>
          <filter id="soft" x="-30%" y="-30%" width="160%" height="160%"><feGaussianBlur stdDeviation="6"/></filter>
          <clipPath id="ring"><path d="M215 240C215 170 240 110 270 80 300 40 350 15 400 15 480 10 560 35 620 70 700 110 760 220 762 310 760 370 730 430 680 470 640 500 600 518 530 517 450 512 380 480 330 440 260 390 215 300 215 240z"/></clipPath>
        </defs>

        <g transform="translate(530 220) scale(.333333)">
          <path fill="#6d1bbd" stroke="#2b0a50" stroke-width="2" d="M-67-78L-43-87 10-117 86-153 90-113 100-75 125-40 160-7 210 17 260 15 310-2 350-27 385-57 410-90 423-135 428-180 420-225 405-250 397-260 386-262 375-254 360-262 353-270 365-290 410-313 435-307 448-312 448-330 465-342 482-330 495-300 500-290 490-292 470-288 458-275 462-250 475-215 490-208 520-212 530-230 528-260 516-270 520-290 512-325 525-315 550-275 600-200 635-145 710-25 760 50 841 165 953 348 915 368 895 361 870 362 853 378 855 395 800 428 790 425 700 478 640 510 560 545 432 607 410 597 370 593 350 610 345 622 315 628 230 520 100 290 0 160-70 40-20-5z"/>
          <path d="M405-290C435-260 445-220 432-165" fill="none" stroke="#8a3be6" stroke-width="7" filter="url(#soft)"/>
          <path d="M355-268l30-12 14 18-24 8z" fill="#32105a"/>
          <ellipse cx="472" cy="-45" rx="34" ry="32" fill="url(#bump)"/>
          <path d="M445-55q8-22 40-14" fill="none" stroke="#4b128a" stroke-width="8" filter="url(#soft)"/>
          <ellipse cx="74" cy="140" rx="42" ry="38" fill="#180c24"/>
          <path d="M28 130Q38 106 62 109 82 124 90 148L108 176 72 180Q30 168 28 140z" fill="#fff"/>
          <ellipse cx="182" cy="92" rx="23" ry="22" fill="#1c0c2c"/>
          <path d="M156 85Q166 70 180 76L200 100 201 111 183 114Q160 108 156 90z" fill="#fff"/>
          <ellipse cx="566" cy="-102" rx="34" ry="28" fill="#1c0c2c"/>
          <path d="M527-100Q535-122 560-124L595-110 602-98 602-75Q580-58 555-63 527-75 527-100z" fill="#fff"/>
          <path d="M650 25Q660 8 685 14 720 35 727 70 722 90 705 89 675 85 655 55 648 40 650 25z" fill="#fff"/>
          <path d="M780 215Q790 192 812 197 840 215 846 248 845 275 828 279 800 272 784 245z" fill="#fff"/>
          <ellipse cx="338" cy="533" rx="31" ry="28" fill="#1c0c2c"/>
          <path d="M300 530Q308 507 338 508 352 518 356 540L365 560Q350 568 335 565 303 555 300 530z" fill="#fff"/>
          <path d="M-43-87L-28-83C10-45 60-20 160 5L175-3 215 17 255 23C210 30 150 33 90 15 30-10-20-55-43-87z" fill="#e0201e" stroke="#400" stroke-width="2"/>
          <path d="M236 85Q240 70 262 74L270 84 250 98z" fill="#c8201c"/>

          <g clip-path="url(#ring)">
            <path d="M200 0h580v540H200z" fill="url(#bowl)"/>
            <path d="M600 60C700 130 750 240 740 350 730 420 700 450 650 490" fill="none" stroke="#8c1214" stroke-width="8" filter="url(#soft)"/>
            <path d="M640 120C710 190 725 280 715 330" fill="none" stroke="#a51414" stroke-width="7" filter="url(#soft)"/>
            <path d="M262 150C290 60 350 30 430 35L540 110 500 155 435 130C400 100 340 100 300 150L290 220z" fill="#761416" filter="url(#soft)"/>
            <path d="M425 30C520 20 600 55 648 138 600 110 560 90 500 82 455 74 425 60 425 30z" fill="#24120f" filter="url(#soft)"/>
            <path d="M395 110Q440 90 520 125L520 150 460 150z" fill="#150a0c" filter="url(#soft)"/>
            <path d="M585 235q50-50 85 15l30 30-60 20q-10-40-55-65z" fill="#4a0c0e" filter="url(#soft)"/>
            <path d="M450 330Q540 290 640 370L650 400 600 370z" fill="#5a0d10" filter="url(#soft)"/>
          </g>
          <path d="M215 240C215 170 240 110 270 80 300 40 350 15 400 15 480 10 560 35 620 70 700 110 760 220 762 310 760 370 730 430 680 470 640 500 600 518 530 517 450 512 380 480 330 440 260 390 215 300 215 240z" fill="none" stroke="#300" stroke-width="3" stroke-dasharray="6 4"/>
          <path d="M218 240C218 175 240 115 272 84M218 240C218 300 262 388 332 438 382 478 450 509 530 514" fill="none" stroke="#e01c1a" stroke-width="9"/>
          <path d="M262 140C275 190 290 230 330 270 370 305 410 320 440 325 435 370 445 430 495 498 420 495 350 450 300 400 250 340 225 280 235 220 240 180 250 160 262 140z" fill="url(#slate)" stroke="#301018" stroke-width="2"/>
          <path d="M292 180C290 130 320 108 360 108 400 105 420 115 435 130 450 145 470 148 500 158 520 175 522 210 515 250 510 280 500 305 470 310 420 310 380 295 340 265 305 240 292 210 292 180z" fill="#fff" stroke="#300" stroke-width="3" stroke-dasharray="6 3"/>
          <path d="M442 385C445 345 485 325 530 328 585 333 628 365 637 410 642 460 632 495 600 505 555 512 515 500 480 470 450 440 440 415 442 385z" fill="#2a0d18"/>
          <path d="M458 390C460 350 490 335 530 335 580 340 620 370 632 410 638 450 630 490 600 500 560 508 520 490 490 460 465 435 458 415 458 390z" fill="#fff"/>
          <path d="M595 220Q602 202 630 202 660 210 662 240 655 272 643 277 637 255 620 245 600 238 595 220z" fill="#fff" stroke="#300" stroke-width="2"/>
          <path d="M505 93L545 103C580 120 600 145 603 165 598 180 580 185 560 192 550 175 545 150 535 130z" fill="#66b5ac" stroke="#244"/>
          <path d="M500 155L528 150 540 175 552 205 547 222 532 205 524 215 518 245 515 195z" fill="#2f7bd0" stroke="#124" stroke-width="2"/>
          <path d="M562 290L610 297 618 312 628 290 622 305 645 320 640 352 600 340 550 318z" fill="#9a5490" stroke="#513" stroke-width="2"/>
          <path d="M656 330Q664 314 678 318 682 360 668 436L657 436 659 412 650 400 655 375 646 355z" fill="#d878d0" stroke="#513" stroke-width="2"/>
          <path d="M705 305Q715 330 711 370 700 420 682 447 690 400 697 350z" fill="#3a4a40" stroke="#200" stroke-width="2"/>
        </g>

        <g transform="translate(500 95) scale(.333333)">
          <path fill="url(#moon)" stroke="#3a3820" stroke-width="2" d="M300 158L315 148 340 140 350 133 365 140 398 140 405 124 416 118 425 125 424 140 440 151 462 144 464 155 456 160C474 185 480 200 486 235L490 240C488 290 480 315 430 355 405 375 380 385 300 396L360 388 395 375 420 350 424 310 426 270 415 235 395 210 370 180 348 165 320 168 303 165z"/>
          <path d="M305 160l45-16 30 12M398 142l50 10" fill="none" stroke="#2c2a1c" stroke-width="10" filter="url(#soft)"/>
          <path d="M213 335q30 30 90 55l60-1-80 10q-50-20-70-64z" fill="#efe6a0" stroke="#554c30"/>
        </g>

        <g transform="translate(400 220) scale(.333333)">
          <path d="M300 672L370 690 410 700 470 775 512 860 520 880 510 910 517 950 505 988 490 965C400 820 340 720 300 672z" fill="#27261b" stroke="#111" stroke-width="2"/>
          <path d="M330 690L510 945" stroke="#0e0e0a" stroke-width="4"/><circle cx="509" cy="944" r="5" fill="#c02020"/>
          <path fill="#301b45" stroke="#140a20" stroke-width="2" d="M165 130L138 95 120 63 130 112 122 115 105 103 92 135 80 165 90 180C130 195 165 240 172 310 175 350 165 380 155 382 130 378 110 355 90 337L80 345 60 325 52 300 60 280 52 248 35 280 30 300 45 325 50 345 45 400 140 545 225 665 240 662 250 682 265 672 300 680 325 672 370 694 410 698 480 785 515 865 520 880 588 735 575 685 470 530 410 485z"/>
          <path d="M225 445Q240 425 265 435C310 455 340 530 342 590 345 630 325 635 320 633L300 610 262 590Q235 560 245 515L232 505 225 480z" fill="#fff"/>
          <path d="M462 575C500 590 545 660 545 700 540 740 525 790 505 795 480 790 420 700 420 665 422 630 440 590 462 575z" fill="#fff"/>
          <path d="M140 484q14-6 14 14l7 22q0 12-10 10-14-8-10-20-8-14-1-26zM197 573q12-4 16 10 8 20-2 18-18-6-14-28z" fill="#fff"/>
          <ellipse cx="92" cy="428" rx="16" ry="18" fill="url(#bump)"/><ellipse cx="378" cy="508" rx="15" ry="20" fill="url(#bump)"/><ellipse cx="218" cy="608" rx="12" ry="10" fill="url(#bump)"/>
          <path d="M258 590q30-25 54 4l3 14-18 8-18 26q-28-12-21-52z" fill="#6a22c4"/><path d="M258 612q20-10 30 20" fill="none" stroke="#3c1280" stroke-width="10" filter="url(#soft)"/><circle cx="373" cy="482" r="3" fill="#fff"/>
          <path d="M250 55l8-14 14 22 54-25 5 20-60 30z" fill="#43292c"/>
          <path d="M410 470L490 445 530 470 475 530z" fill="#cf1e1c"/>
          <path fill="url(#band)" stroke="#300" stroke-width="2" d="M264 78L290 65 325 42C350 90 370 160 410 215L470 240 480 265 505 290 510 315 600 450 700 610 703 640 690 675 655 688 640 650 560 520 520 465 480 455 380 300 270 120z"/>
          <path d="M180 145L172 128 195 113 220 122 240 106 262 118 272 110 492 452 420 475z" fill="#6f484a" stroke="#211" stroke-width="2" stroke-dasharray="6 3"/>
          <circle cx="184" cy="132" r="6" fill="#fff"/>
          <path d="M172 142L270 275 415 482 480 525 578 682" fill="none" stroke="#200" stroke-width="14"/>
          <path d="M174 142L272 275 415 480 482 525 578 682" fill="none" stroke="#e4221e" stroke-width="9"/>
          <path d="M290 68L320 45 356 120 340 138 328 125z" fill="#4a3333" stroke="#200" stroke-width="2"/>
          <path d="M345 165L372 160 435 228 440 245 420 268 395 255 350 190z" fill="#2d2d3e"/><path d="M335 150l30 10M380 225l50 30" stroke="#150c10" stroke-width="20" filter="url(#soft)"/>
          <path d="M430 250L448 250 535 375 585 450 640 542 622 540 540 440 430 275z" fill="#604728" stroke="#211" stroke-width="2"/>
          <path d="M430 488L480 466 520 460 560 525 630 640 560 625 558 640 575 665 572 680 470 520z" fill="#1f4b72" stroke="#122" stroke-width="2"/>
          <path d="M430 488l50-22-38 28 32-10" fill="none" stroke="#d0201c" stroke-width="5"/>
          <path d="M628 665L662 668 645 650 660 630 680 640 668 595 700 620 703 645 690 675 655 689 628 688z" fill="#1f4058"/>
          <path d="M640 560l55 60-10 50-20 8-20-40z" fill="#d31d1b"/><path d="M640 555l40 30 15 40" fill="none" stroke="#40100e" stroke-width="16" filter="url(#soft)"/>
          <path d="M562 628l70-2 10 30-12 12v20l-50-10z" fill="#fff"/>
        </g>

        <g class="triad">
          <path d="M346 542l-9-13" stroke="#1c6a28" stroke-width="4"/><path d="M332 522l9 5-6 5z" fill="#124c1c"/>
          <path d="M346 542l13-6" stroke="#a01c20" stroke-width="4"/><path d="M366 532l-9 0 3 7z" fill="#781014"/>
          <path d="M346 543l2-8" stroke="#1818b4" stroke-width="3"/><circle cx="348" cy="534" r="3.500" fill="#1414c0"/>
          <path d="M329 515l2 4 3-4M331 519v3" fill="none" stroke="#2e8a3a"/><path d="M346 526h4l-4 5h4" fill="none" stroke="#2424b8"/><path d="M365 526l5 6M370 526l-5 6" stroke="#c02c30"/>
        </g>
      </svg>
      <div class="combo">
        <select aria-label="Named view"><option>Custom</option></select>
        <svg viewBox="0 0 5 3"><use href="#caret"/></svg>
      </div>
    </div>
    <div class="vscroll"><button aria-label="Scroll up"><svg viewBox="0 0 8 8"><path d="M1 5l3-3 3 3"/></svg></button><button aria-label="Scroll down"><svg viewBox="0 0 8 8"><path d="M1 3l3 3 3-3"/></svg></button></div>
    <div class="hscroll"><button aria-label="Scroll left"><svg viewBox="0 0 8 8"><path d="M5 1L2 4l3 3"/></svg></button><button aria-label="Scroll right"><svg viewBox="0 0 8 8"><path d="M3 1l3 3-3 3"/></svg></button></div>
  </section>

  <aside class="task">
    <button class="ttab active" aria-label="SolidWorks resources"><svg class="ico" viewBox="0 0 14 14"><path d="M3 7v6h8V7" fill="#fff8d8" stroke="#333"/><path d="M1 7l6-5 6 5" fill="#fff" stroke="#333" stroke-width="1.500"/><path d="M6 9h3v4H6z" fill="#b07820"/></svg></button>
    <button class="ttab" aria-label="Design library"><svg class="ico" viewBox="0 0 14 14"><path d="M1 4h3v9H1zM5 2h3v11H5z" fill="#2c6c8c" stroke="#123"/><path d="M9 3l4 1v9H9z" fill="#3c9c48" stroke="#123"/></svg></button>
    <button class="ttab" aria-label="File explorer"><svg class="ico" viewBox="0 0 14 14"><path d="M1 2h5l1 2h6v8H1z" fill="#f5d460" stroke="#b08a20"/><circle cx="8" cy="7" r="3" fill="#cfe4f8" stroke="#4a6a94"/><path d="M10 9l3 4" stroke="#4a6a94" stroke-width="2"/></svg></button>
    <button class="ttab" aria-label="View palette"><svg class="ico" viewBox="0 0 14 14"><path d="M1 1h5v5H1z" fill="#7898c8"/><path d="M8 1h5v5H8zM8 8h5v4H8z" fill="#e6cf60" stroke="#a89040"/><path d="M1 8h5v4H1z" fill="#b8c8e0"/></svg></button>
    <button class="chev" aria-label="Expand task pane"><svg viewBox="0 0 12 12"><use href="#left2"/></svg></button>
    <i class="track"></i>
    <button class="chev" aria-label="Collapse task pane"><svg viewBox="0 0 12 12"><use href="#left2"/></svg></button>
  </aside>

  <div class="vbar w38 ink">
    <i class="hgrip"></i>
    <div class="col">
      <button class="tool" aria-label="Sketch mode"><svg viewBox="0 0 14 14"><use href="#sketch"/></svg></button>
      <button class="tool" aria-label="3D sketch mode"><svg viewBox="0 0 14 14"><path d="M2 2h4L4 5q4 1 0 4H2M8 11h5" fill="none" stroke="#c83418" stroke-width="2"/><path d="M5 12l1-3 6-6 2 2-6 6z" fill="#f0b828" stroke="#60400a"/></svg></button>
      <button class="tool" aria-label="Dimension"><svg viewBox="0 0 14 14"><use href="#smart"/></svg></button>
      <i class="rule"></i>
      <button class="tool" aria-label="Line"><svg viewBox="0 0 14 14"><path d="M1 2l12 10"/></svg></button>
      <button class="tool" aria-label="Rectangle"><svg viewBox="0 0 14 14"><path d="M1 3h12v9H1z"/><path d="M0 12h3M11 3h3" stroke="#c03030"/></svg></button>
      <button class="tool" aria-label="Circle"><svg viewBox="0 0 14 14"><circle cx="7" cy="7" r="5"/><path d="M5 7h4M7 5v4" stroke="#333" stroke-width="1"/></svg></button>
      <button class="tool" aria-label="Centerpoint arc"><svg viewBox="0 0 14 14"><circle cx="7" cy="7" r="5" stroke-dasharray="2 2" stroke="#333"/><path d="M3 3q5-4 9 3"/><path d="M3 3l4 4" stroke="#c03030"/></svg></button>
      <button class="tool" aria-label="Tangent arc"><svg viewBox="0 0 14 14"><path d="M1 2h6a5 5 0 1 1-4 9"/><path d="M1 2h5" stroke="#b03030"/><path d="M5 7h4M7 5v4" stroke="#c03030" stroke-width="1"/></svg></button>
      <button class="tool" aria-label="3 point arc"><svg viewBox="0 0 14 14"><path d="M2 10a5 5 0 1 1 10 0"/><path d="M1 9h3M10 9h3M7 3v2M5 8h4M7 6v4" stroke="#c03030"/></svg></button>
      <button class="tool" aria-label="Sketch fillet"><svg class="dim line" viewBox="0 0 14 14"><path d="M1 2h5q6 1 6 6v5"/><path d="M3 8h3M5 6v4"/></svg></button>
      <button class="tool" aria-label="Construction line"><svg viewBox="0 0 14 14"><path d="M7 0v14" stroke-dasharray="3 1"/></svg></button>
      <button class="tool" aria-label="Spline"><svg viewBox="0 0 14 14"><path d="M1 12q6 1 4-5-1-5 4-4 3 2 4-2"/></svg></button>
      <button class="tool" aria-label="Point"><svg viewBox="0 0 14 14"><path d="M7 3v8M4 5l6 4M10 5L4 9" stroke-width="1"/></svg></button>
      <button class="tool" aria-label="Trim entities"><svg viewBox="0 0 14 14"><path d="M2 2l11 1-1 10-11-1zM2 7h11M7 2v10" stroke-dasharray="2 1" stroke-width="1"/></svg></button>
      <i class="rule"></i>
      <button class="tool" aria-label="Add relation"><svg class="dim line" viewBox="0 0 14 14"><path d="M6 1v11M0 12h13M6 8h5v4" stroke-width="2"/></svg></button>
      <button class="tool" aria-label="Display relations"><svg class="dim line" viewBox="0 0 14 14"><circle cx="5" cy="5" r="3"/><path d="M8 2v6M1 12h12M10 3l-2 6h4" stroke-width="1.500"/></svg></button>
      <div class="split"><button class="tool" aria-label="Quick snaps"><svg class="dim line" viewBox="0 0 14 14"><path d="M1 13V1h12" stroke-width="2"/><circle cx="8" cy="8" r="4"/><path d="M7 8h2"/></svg></button><button class="drop dim" aria-label="Quick snap list"><svg viewBox="0 0 5 3"><use href="#caret"/></svg></button></div>
      <i class="rule"></i>
      <button class="tool" aria-label="Mirror entities"><svg class="dim line" viewBox="0 0 14 14"><path d="M2 12l3-9 2-2 2 2 3 9zM7 3v11" stroke-width="1.500"/></svg></button>
      <button class="tool" aria-label="Convert entities"><svg class="dim line" viewBox="0 0 14 14"><path d="M1 2h9v10H3l-2-3zM5 4h8v9H5z"/></svg></button>
      <button class="tool" aria-label="Offset entities"><svg class="dim line" viewBox="0 0 14 14"><path d="M1 2h11v6l-5 5M1 5h8v3l-5 4" stroke-width="1.500"/></svg></button>
      <button class="tool" aria-label="Split entities"><svg class="dim line" viewBox="0 0 14 14"><path d="M0 2h14"/><path d="M7 2v12" stroke-dasharray="2 1"/></svg></button>
      <button class="tool" aria-label="Trim"><svg class="dim line" viewBox="0 0 14 14"><path d="M0 5h14M0 10h14M4 1v13M10 1v13M7 3v8"/></svg></button>
      <button class="tool" aria-label="Linear sketch pattern"><svg class="dim line" viewBox="0 0 14 14"><path d="M1 2h12M1 12h12M3 2v10M11 2v10M5 7h4"/></svg></button>
      <button class="tool" aria-label="Move entities"><svg class="dim line" viewBox="0 0 14 14"><path d="M1 1h6v5H1z" stroke-dasharray="1 1"/><path d="M7 8h6v5H7zM3 8v3h3" stroke-width="1.500"/></svg></button>
    </div>
  </div>
  <div class="vbar w24 last">
    <i class="hgrip"></i>
    <div class="col">
      <button class="tool" aria-label="Scan mesh"><svg viewBox="0 0 14 14"><path d="M1 3l5-2 3 3v6l-2-1-1-4-2 1v6l-3-1z" fill="#a8b4c8" stroke="#56606e"/><path d="M8 7l5-5v10z" fill="#e0505a" stroke="#b01c24"/></svg></button>
      <button class="tool" aria-label="Mesh wizard"><svg viewBox="0 0 14 14"><path d="M3 6h8l-3 7H1z" fill="#f3dc2c" stroke="#6c5a08"/><path d="M5 6l5-5M7 1l3 4" stroke="#b03020" stroke-width="1.500"/></svg></button>
      <button class="tool" aria-label="Surface wizard"><svg viewBox="0 0 14 14"><path d="M2 7l6-2 4 4-6 4z" fill="#f0a43a" stroke="#7a4a0c"/><path d="M5 5l6-4M2 1l4 4" stroke="#b03020" stroke-width="1.500"/></svg></button>
    </div>
  </div>
</main>

<footer class="status">
  <span class="ready">Ready</span>
  <span class="cells"><i></i><i></i><i></i></span>
  <span>Editing Part</span>
  <span class="cells"><i></i><i></i></span>
  <button class="q" aria-label="Quick tips"><svg viewBox="0 0 12 12"><path d="M0 0h12v12H0z" fill="#c8f0b8"/><path d="M3 4q3-5 6 0 0 2-3 3M6 9v2" fill="none" stroke="#0c7a20" stroke-width="2"/></svg></button>
</footer>
</body>
</html>
```

FILE: styles.css
```css
* { box-sizing: border-box; }

body {
  margin: 0;
  height: 100vh;
  display: flex;
  flex-direction: column;
  overflow: hidden;
  background: #ece9d8;
  color: #111;
  font: 9px/12px "DejaVu Sans Condensed", "DejaVu Sans", sans-serif;
}

button {
  margin: 0;
  padding: 0;
  border: 0;
  background: none;
  color: inherit;
  font: inherit;
}

svg { display: block; }
.sprite { position: absolute; width: 0; height: 0; }
.ico { width: 14px; height: 14px; flex: none; }

/* title bar */
.titlebar {
  flex: none;
  display: flex;
  align-items: center;
  height: 21px;
  padding: 0 2px;
  background: linear-gradient(#3a8cf8 0, #0a5be6 3px, #0453e0 10px, #0562fa 17px, #0148c8 21px);
}
.logo { width: 14px; height: 14px; }
.titlebar h1 {
  flex: 1;
  margin: 0 0 0 2px;
  color: #fff;
  font: bold 11px/16px Roboto, "Noto Sans", sans-serif;
  text-shadow: 1px 1px 0 #0a2f8c;
  white-space: nowrap;
}
.winbtns { display: flex; gap: 2px; }
.winbtns button {
  width: 17px;
  height: 17px;
  border: 1px solid #dfe9fb;
  border-radius: 3px;
  background: linear-gradient(135deg, #6d9df4, #1c50d0);
}
.winbtns .close { background: linear-gradient(135deg, #f09070, #cc3a14); }
.winbtns svg { width: 15px; height: 15px; fill: none; stroke: #fff; }

/* menu bar */
.menubar {
  flex: none;
  display: flex;
  align-items: center;
  gap: 9px;
  height: 16px;
  padding: 0 4px 0 3px;
}
.menubar > .ico { margin-right: -6px; }
.docbtns { display: flex; gap: 4px; margin-left: auto; }
.docbtns button { width: 11px; height: 11px; background: #f6f4ea; }
.docbtns svg { width: 10px; height: 10px; fill: none; stroke: #5c5a4c; }

/* toolbars */
.toolbars {
  flex: none;
  display: flex;
  height: 25px;
  border-top: 1px solid #c9c5b2;
  border-bottom: 1px solid #c9c5b2;
}
.hbar {
  display: flex;
  align-items: center;
  padding: 0 2px 0 3px;
  border-right: 1px solid #b5b19f;
}
.grip {
  width: 4px;
  height: 17px;
  margin-right: 2px;
  border: solid #b5b19f;
  border-width: 0 1px;
  background: #fbfaf4;
}
.set { display: flex; }
.sep { width: 1px; height: 17px; margin: 0 2px 0 3px; background: #c9c5b2; }
.sep.wide { margin: 0 4px; }
.tool {
  flex: none;
  display: flex;
  align-items: center;
  justify-content: center;
  width: 18px;
  height: 18px;
}
.set .tool:nth-child(2n) { margin-right: 1px; }
.tool svg { width: 14px; height: 14px; }
.tool.on { border: 1px solid #8ba3c4; background: #fff; }
.drop { width: 10px; height: 18px; display: flex; align-items: center; justify-content: center; }
.drop svg { width: 5px; height: 3px; }
.dim { fill: #d8d4c0; stroke: #b2ae96; }
.dim.line { fill: none; }
.dim .drop svg, .drop.dim svg { fill: #b2ae96; stroke: none; }

/* work area */
.work { flex: 1; min-height: 0; display: flex; }
.vbar {
  flex: none;
  align-self: flex-start;
  padding: 4px 2px 1px;
  border-right: 1px solid #b5b19f;
  border-bottom: 1px solid #b5b19f;
}
.w24 { width: 24px; }
.w34 { width: 34px; }
.w35 { width: 36px; }
.w36 { width: 36px; }
.w38 { width: 37px; padding-left: 5px; }
.last { margin-left: 2px; border-right: 0; }
.hgrip {
  display: block;
  height: 4px;
  margin-bottom: 1px;
  border: solid #b5b19f;
  border-width: 1px 0;
  background: #fbfaf4;
}
.col { display: flex; flex-direction: column; align-items: flex-start; }
.col > :nth-child(2n) { margin-bottom: 1px; }
.col > .rule { width: 100%; height: 1px; margin: 2px 0 3px; background: #c9c5b2; }
.split { display: flex; }
.ink .tool svg:not(.dim) { fill: none; stroke: #2424a8; stroke-width: 1.5px; }

/* feature tree */
.tree {
  flex: none;
  display: flex;
  flex-direction: column;
  width: 155px;
  border-left: 1px solid #9fb2cc;
  border-right: 1px solid #9fb2cc;
  background: #fff;
}
.tabs {
  display: flex;
  align-items: flex-end;
  gap: 1px;
  height: 26px;
  padding: 0 3px 0 1px;
  border-bottom: 1px solid #9fb2cc;
  background: #ece9d8;
}
.tab {
  display: flex;
  align-items: center;
  justify-content: center;
  width: 22px;
  height: 18px;
  border: 1px solid #a9b6c6;
  border-bottom: 0;
  background: #f3f1e6;
}
.tab.active { height: 20px; margin-bottom: -1px; border-top: 2px solid #f0a030; background: #fff; }
.more { margin: 0 2px 3px auto; }
.more svg { width: 13px; height: 13px; }
.flip { rotate: 180deg; }
.nodes {
  margin: 0;
  padding: 0 0 0 7px;
  border-bottom: 2px solid #8c8c1c;
  list-style: none;
  font-family: "Noto Sans", sans-serif;
}
.nodes li {
  display: flex;
  align-items: center;
  gap: 4px;
  height: 14px;
  white-space: nowrap;
}
.nodes li:nth-child(2n) { height: 15px; }
.nodes .root { margin-left: -5px; }
.plus {
  width: 7px;
  height: 7px;
  border: 1px solid #8a94a6;
  background:
    linear-gradient(#222, #222) center / 3px 1px no-repeat,
    linear-gradient(#222, #222) center / 1px 3px no-repeat,
    #fff;
}
.noplus { width: 7px; height: 15px; background: linear-gradient(90deg, transparent 3px, #c8c8c8 3px, #c8c8c8 4px, transparent 4px); }
.splitter {
  flex: none;
  display: flex;
  align-items: center;
  justify-content: center;
  width: 5px;
  padding-bottom: 18px;
  border-right: 1px solid #9c998a;
}
.splitter svg { width: 3px; height: 18px; }

/* model view */
.view {
  flex: 1;
  min-width: 0;
  display: grid;
  grid-template: minmax(0, 1fr) 13px / minmax(0, 1fr) 13px;
  background: #fff;
}
.canvas { display: flex; flex-direction: column; min-height: 0; }
.model { flex: 1; min-height: 0; width: 100%; }
.combo { position: relative; width: 81px; height: 15px; }
.combo select {
  appearance: none;
  width: 100%;
  height: 15px;
  padding: 0 0 0 15px;
  border: 1px solid #222;
  border-radius: 0;
  background: linear-gradient(90deg, transparent 69px, #222 69px, #222 70px, transparent 70px), #ffffdc;
  color: #111;
  font: inherit;
}
.combo svg { position: absolute; right: 3px; top: 6px; width: 5px; height: 3px; pointer-events: none; }
.vscroll, .hscroll { display: flex; justify-content: space-between; background: #fbfbf8; }
.vscroll { flex-direction: column; padding-top: 4px; border-top: 2px solid #555; }
.hscroll { padding-left: 4px; border-left: 1px solid #333; border-bottom: 1px solid #c9c5b2; }
.vscroll button, .hscroll button {
  display: flex;
  align-items: center;
  justify-content: center;
  width: 12px;
  height: 12px;
  border: 1px solid #e2e0d6;
  background: #f1f0e8;
}
.vscroll svg, .hscroll svg { width: 8px; height: 8px; fill: none; stroke: #c2bfb2; stroke-width: 1.5px; }

/* task pane */
.task {
  flex: none;
  display: flex;
  flex-direction: column;
  align-items: flex-start;
  width: 18px;
  padding: 21px 0 54px;
  border-left: 1px solid #8f9aa8;
}
.ttab {
  display: flex;
  align-items: center;
  justify-content: center;
  width: 16px;
  height: 22px;
  border: 1px solid #b3bfce;
  border-left: 0;
  border-radius: 0 3px 3px 0;
  background: #e6e6e0;
}
.ttab.active { width: 17px; border-right: 2px solid #f0a030; background: #fff; }
.chev { margin: 1px 0 6px 2px; }
.chev svg { width: 13px; height: 13px; }
.track { flex: 1; width: 5px; margin: 0 0 4px 5px; border: solid #b5b19f; border-width: 0 1px; background: #f6f4ea; }

/* status bar */
.status {
  flex: none;
  display: flex;
  align-items: center;
  gap: 6px;
  height: 15px;
  padding: 0 37px 0 1px;
  border-top: 1px solid #b5b19f;
  border-bottom: 2px solid #3f6cb8;
}
.ready { flex: 1; }
.cells { display: flex; gap: 6px; }
.cells i { width: 1px; height: 11px; background: #cfcbb8; }
.q { margin-left: 6px; }
.q svg { width: 12px; height: 12px; }
```
